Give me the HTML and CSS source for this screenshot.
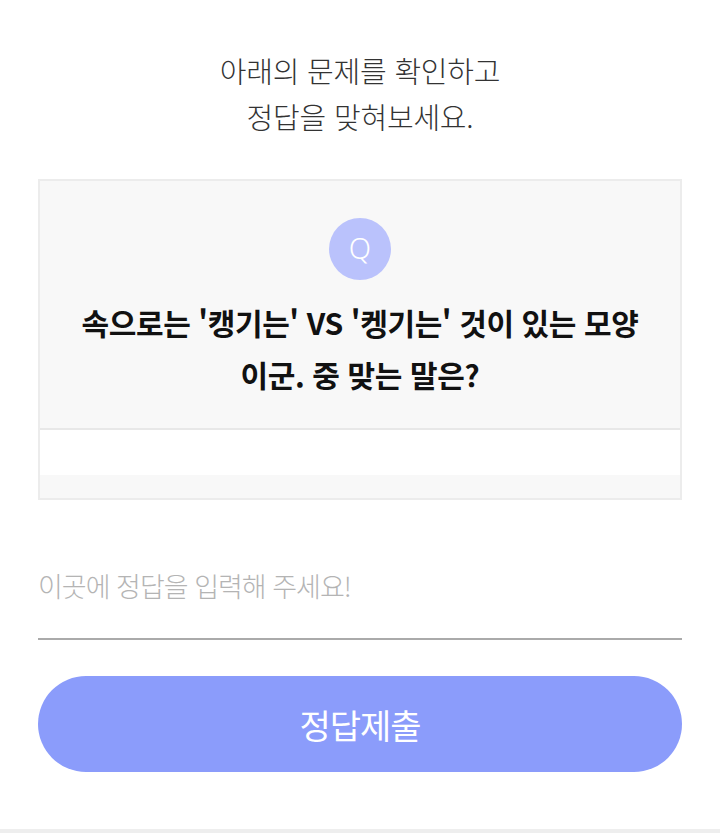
FILE: index.html
```html
<!DOCTYPE html>
<html lang="ko">
<head>
<meta charset="utf-8">
<link rel="stylesheet" href="styles.css">
</head>
<body>
<div class="page">
  <p class="intro">아래의 문제를 확인하고<br>정답을 맞혀보세요.</p>
  <div class="card">
    <div class="card-top">
      <div class="q-badge">Q</div>
      <p class="question">속으로는 '캥기는' VS '켕기는' 것이 있는 모양<br>이군. 중 맞는 말은?</p>
    </div>
    <div class="card-mid"></div>
    <div class="card-bottom"></div>
  </div>
  <div class="answer">
    <input class="answer-input" type="text" placeholder="이곳에 정답을 입력해 주세요!">
  </div>
  <button class="submit" type="button">정답제출</button>
</div>
<div class="footer-line"></div>
</body>
</html>
```
FILE: styles.css
```css
html, body {
  margin: 0;
  padding: 0;
  background: #fff;
}
body {
  font-family: "Noto Sans CJK KR", "Noto Sans", sans-serif;
  height: 833px;
  position: relative;
  overflow: hidden;
}
.page {
  padding: 0 38px;
  display: flex;
  flex-direction: column;
}
.intro {
  margin: 47px 0 0 0;
  text-align: center;
  font-size: 29px;
  line-height: 46px;
  font-weight: 300;
  color: #333;
  letter-spacing: -0.2px;
}
.card {
  margin-top: 40px;
  border: 2px solid #ececec;
  background: #f8f8f8;
  display: flex;
  flex-direction: column;
}
.card-top {
  display: flex;
  flex-direction: column;
  align-items: center;
  padding-top: 37px;
  height: 249px;
  box-sizing: border-box;
  border-bottom: 2px solid #e8e8e8;
}
.q-badge {
  width: 62px;
  height: 62px;
  border-radius: 50%;
  background: #bac2fc;
  color: #fff;
  font-family: "Noto Sans", sans-serif;
  font-weight: 300;
  font-size: 29px;
  line-height: 60px;
  text-align: center;
}
.question {
  margin: 16px 0 0 0;
  text-align: center;
  font-size: 30px;
  line-height: 52px;
  font-weight: 700;
  color: #111;
  letter-spacing: -0.4px;
}
.card-mid {
  height: 45px;
  background: #fff;
}
.card-bottom {
  height: 23px;
  background: #f8f8f8;
}
.answer {
  margin-top: 58px;
  border-bottom: 2px solid #aaa;
  height: 80px;
}
.answer-input {
  width: 100%;
  border: none;
  outline: none;
  background: transparent;
  font-family: "Noto Sans CJK KR", sans-serif;
  font-size: 27px;
  font-weight: 300;
  letter-spacing: -1px;
  padding: 0;
  height: 54px;
  color: #333;
}
.answer-input::placeholder {
  color: #b4b4b4;
}
.submit {
  margin-top: 36px;
  height: 96px;
  border: none;
  border-radius: 48px;
  background: #8b9cfb;
  color: #fff;
  font-family: "Noto Sans CJK KR", sans-serif;
  font-size: 34px;
  font-weight: 400;
  letter-spacing: -1px;
}
.footer-line {
  position: absolute;
  left: 0;
  right: 0;
  bottom: 0;
  height: 4px;
  background: #eeeeee;
}
```
